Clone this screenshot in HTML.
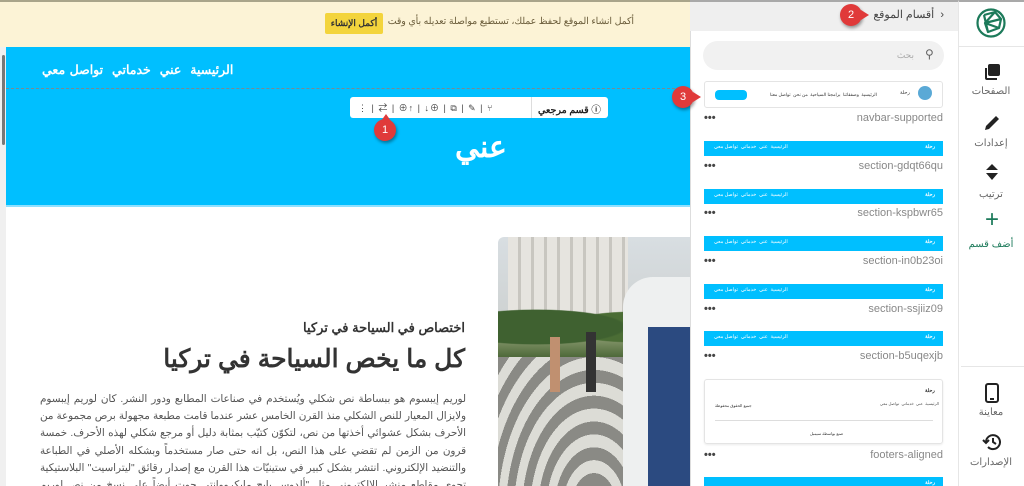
<!DOCTYPE html>
<html><head><meta charset="utf-8"><style>
*{box-sizing:border-box;margin:0;padding:0}
html,body{width:1024px;height:486px;overflow:hidden}
body{position:relative;background:#fff;font-family:"Liberation Sans","Noto Sans CJK SC",sans-serif;}
.abs{position:absolute}
.ar{direction:rtl}
.banner{left:0;top:0;width:690px;height:47px;background:#fcf3d6;border-top:2px solid #a9a48a}
.thumb{position:absolute;left:704px;width:239px;height:15px;background:#00bfff}
.thumb .l{position:absolute;right:8px;top:3px;font-size:5px;color:#fff;font-weight:bold}
.thumb .n{position:absolute;left:10px;top:3px;font-size:5px;color:#fff;direction:rtl}
.lab{position:absolute;right:81px;font-size:11px;color:#888}
.dots{position:absolute;left:704px;font-size:11px;color:#444;font-weight:bold}
.ic{position:absolute;left:958px;width:66px;text-align:center;color:#666;font-size:10px}
.badge{position:absolute;width:22px;height:22px;border-radius:50%;background:#e03a3a;color:#fff;font-size:11px;text-align:center;line-height:22px;box-shadow:1px 2px 3px rgba(0,0,0,.4)}
</style></head><body>
<div class="abs banner"></div>
<div class="abs ar" style="right:390px;top:16px;font-size:9.3px;color:#6a5c3a;white-space:nowrap">أكمل انشاء الموقع لحفظ عملك، تستطيع مواصلة تعديله بأي وقت</div>
<div class="abs" style="left:325px;top:13px;width:58px;height:21px;background:#f3d43c;border-radius:2px;font-size:9px;color:#333;text-align:center;line-height:21px;font-weight:bold">أكمل الإنشاء</div>
<div class="abs" style="left:0;top:47px;width:6px;height:439px;background:#f0f0f0"></div>
<div class="abs" style="left:2px;top:55px;width:3px;height:90px;background:#777;border-radius:2px"></div>
<div class="abs" style="left:6px;top:47px;width:684px;height:158px;background:#00bfff"></div>
<div class="abs" style="left:6px;top:88px;width:684px;border-top:1px dashed #7a8a90"></div>
<div class="abs ar" style="left:42px;top:62px;font-size:12.5px;word-spacing:1px;color:#fff;font-weight:bold;white-space:nowrap">الرئيسية&nbsp; عني&nbsp; خدماتي&nbsp; تواصل معي</div>
<div class="abs" style="left:350px;top:97px;width:258px;height:21px;background:#fff;border-radius:3px"></div>
<div class="abs ar" style="left:538px;top:102px;font-size:9.5px;color:#222;white-space:nowrap;font-weight:bold">ⓘ قسم مرجعي</div>
<div class="abs" style="left:531px;top:97px;width:1px;height:21px;background:#ddd"></div>
<div class="abs" style="left:358px;top:101px;font-size:9px;color:#444;white-space:nowrap;letter-spacing:1px">⋮ | ⇄ | ⊕↑ | ↓⊕ | ⧉ | ✎ | ⑂</div>
<div class="abs" style="left:455px;top:130px;font-size:30px;color:#fff;font-weight:bold">عني</div>
<div class="abs" style="left:6px;top:205px;width:684px;height:2px;background:#8fe0ff"></div>
<div class="abs ar" style="right:559px;top:320px;font-size:13px;color:#333;font-weight:bold;white-space:nowrap">اختصاص في السياحة في تركيا</div>
<div class="abs ar" style="right:559px;top:344px;font-size:25px;color:#333;font-weight:bold;white-space:nowrap">كل ما يخص السياحة في تركيا</div>
<div class="abs ar" style="left:40px;width:426px;top:391px;font-size:10.3px;line-height:17.2px;color:#555;text-align:justify;height:95px;overflow:hidden">لوريم إيبسوم هو ببساطة نص شكلي ويُستخدم في صناعات المطابع ودور النشر. كان لوريم إيبسوم ولايزال المعيار للنص الشكلي منذ القرن الخامس عشر عندما قامت مطبعة مجهولة برص مجموعة من الأحرف بشكل عشوائي أخذتها من نص، لتكوّن كتيّب بمثابة دليل أو مرجع شكلي لهذه الأحرف. خمسة قرون من الزمن لم تقضي على هذا النص، بل انه حتى صار مستخدماً وبشكله الأصلي في الطباعة والتنضيد الإلكتروني. انتشر بشكل كبير في ستينيّات هذا القرن مع إصدار رقائق "ليتراسيت" البلاستيكية تحوي مقاطع منشر الإلكتروني مثل "ألدوس بايج مايكرووانتي حوت أيضاً على نسخ من نص لوريم إيبسوم.</div>
<div class="abs" style="left:498px;top:237px;width:192px;height:249px;border-top-left-radius:6px;overflow:hidden;background:linear-gradient(#d8dee2 0%,#cfd3d3 30%,#8a9a70 40%,#4f6a3a 48%,#9a9a95 55%,#b5b5b0 100%)">
 <div class="abs" style="left:10px;top:0;width:120px;height:90px;background:repeating-linear-gradient(90deg,#e6e4df 0 10px,#c8c6c0 10px 13px)"></div>
 <div class="abs" style="left:0;top:60px;width:192px;height:60px;background:radial-gradient(ellipse at 20% 50%,#3f6130 0 40%,transparent 42%),radial-gradient(ellipse at 70% 50%,#4b6d35 0 35%,transparent 37%)"></div>
 <div class="abs" style="left:0;top:120px;width:192px;height:129px;background:repeating-radial-gradient(ellipse at 50% 120%,#8a8a85 0 8px,#dcdcd6 8px 16px)"></div>
 <div class="abs" style="left:125px;top:40px;width:70px;height:209px;background:#eef0f0;border-top-left-radius:30px"></div>
 <div class="abs" style="left:150px;top:90px;width:45px;height:159px;background:#2b4a80"></div>
 <div class="abs" style="left:52px;top:100px;width:10px;height:55px;background:#c09070"></div>
 <div class="abs" style="left:88px;top:95px;width:10px;height:60px;background:#333"></div>
</div>
<div class="abs" style="left:690px;top:0;width:268px;height:486px;background:#fff;border-left:1px solid #ddd"></div>
<div class="abs" style="left:690px;top:0;width:268px;height:31px;background:#efefef;border-top:2px solid #a9a9a9"></div>
<div class="abs ar" style="right:80px;top:8px;font-size:11px;color:#444;white-space:nowrap">‹&nbsp; أقسام الموقع</div>
<div class="abs" style="left:703px;top:41px;width:241px;height:29px;background:#f1f1f1;border-radius:15px"></div>
<div class="abs" style="left:925px;top:47px;font-size:12px;color:#666">⚲</div>
<div class="abs ar" style="right:110px;top:50px;font-size:9px;color:#aaa">بحث</div>
<div class="abs" style="left:704px;top:81px;width:239px;height:27px;border:1px solid #e4e4e4;border-radius:3px;background:#fff"></div>
<div class="abs" style="left:715px;top:90px;width:32px;height:10px;background:#00bfff;border-radius:4px"></div>
<div class="abs ar" style="left:770px;top:92px;font-size:4.5px;color:#333;white-space:nowrap">الرئيسية&nbsp; وصفقاتنا&nbsp; برامجنا السياحية&nbsp; من نحن&nbsp; تواصل معنا</div>
<div class="abs" style="left:900px;top:90px;font-size:5px;color:#333">رحلة</div>
<div class="abs" style="left:918px;top:86px;width:14px;height:14px;border-radius:50%;background:#5aa9d6"></div>
<div class="lab" style="top:112px">navbar-supported</div><div class="dots" style="top:112px">•••</div>
<div class="thumb" style="top:141px"><span class="l">رحلة</span><span class="n">الرئيسية&nbsp; عني&nbsp; خدماتي&nbsp; تواصل معي</span></div>
<div class="lab" style="top:160px">section-gdqt66qu</div><div class="dots" style="top:160px">•••</div>
<div class="thumb" style="top:189px"><span class="l">رحلة</span><span class="n">الرئيسية&nbsp; عني&nbsp; خدماتي&nbsp; تواصل معي</span></div>
<div class="lab" style="top:207px">section-kspbwr65</div><div class="dots" style="top:207px">•••</div>
<div class="thumb" style="top:236px"><span class="l">رحلة</span><span class="n">الرئيسية&nbsp; عني&nbsp; خدماتي&nbsp; تواصل معي</span></div>
<div class="lab" style="top:255px">section-in0b23oi</div><div class="dots" style="top:255px">•••</div>
<div class="thumb" style="top:284px"><span class="l">رحلة</span><span class="n">الرئيسية&nbsp; عني&nbsp; خدماتي&nbsp; تواصل معي</span></div>
<div class="lab" style="top:303px">section-ssjiiz09</div><div class="dots" style="top:303px">•••</div>
<div class="thumb" style="top:331px"><span class="l">رحلة</span><span class="n">الرئيسية&nbsp; عني&nbsp; خدماتي&nbsp; تواصل معي</span></div>
<div class="lab" style="top:350px">section-b5uqexjb</div><div class="dots" style="top:350px">•••</div>
<div class="abs" style="left:704px;top:379px;width:239px;height:65px;border:1px solid #e4e4e4;border-radius:3px;box-shadow:0 1px 2px rgba(0,0,0,.08)"></div>
<div class="abs" style="left:925px;top:388px;font-size:5px;color:#333;font-weight:bold">رحلة</div>
<div class="abs ar" style="left:880px;top:401px;font-size:4px;color:#555;white-space:nowrap">الرئيسية&nbsp; عني&nbsp; خدماتي&nbsp; تواصل معي</div>
<div class="abs" style="left:715px;top:403px;font-size:4px;color:#333">جميع الحقوق محفوظة</div>
<div class="abs" style="left:715px;top:420px;width:218px;border-top:1px solid #ddd"></div>
<div class="abs" style="left:810px;top:431px;font-size:4px;color:#333">صنع بواسطة سيمبل</div>
<div class="lab" style="top:449px">footers-aligned</div><div class="dots" style="top:449px">•••</div>
<div class="thumb" style="top:477px"><span class="l">رحلة</span></div>
<div class="abs" style="left:958px;top:0;width:66px;height:486px;background:#fff;border-left:1px solid #e6e6e6;border-top:2px solid #a9a9a9"></div>
<div class="abs" style="left:958px;top:46px;width:66px;border-top:1px solid #e6e6e6"></div>
<div class="abs" style="left:961px;top:366px;width:63px;border-top:1px solid #e6e6e6"></div>
<svg class="abs" style="left:975px;top:7px" width="32" height="32" viewBox="0 0 32 32" fill="none" stroke="#1c7a5a" stroke-width="2.2" stroke-linejoin="round"><circle cx="16" cy="16" r="13.5"/><path d="M9 8 L20 5 L26 12 L10 16 L13 25 L24 21 L26 12 M10 16 L20 5 M13 25 L9 8 M10 16 L24 21"/></svg>
<svg class="abs" style="left:983px;top:63px" width="18" height="18" viewBox="0 0 18 18"><rect x="5" y="1" width="12" height="12" rx="2" fill="#222"/><path d="M3 5 v10 a1 1 0 0 0 1 1 h10" stroke="#222" stroke-width="2" fill="none"/></svg>
<div class="ic" style="top:86px">الصفحات</div>
<svg class="abs" style="left:983px;top:114px" width="18" height="18" viewBox="0 0 18 18"><path d="M2 16 L3 12 L13 2 L16 5 L6 15 Z" fill="#222"/></svg>
<div class="ic" style="top:138px">إعدادات</div>
<svg class="abs" style="left:985px;top:164px" width="14" height="16" viewBox="0 0 14 16"><path d="M7 0 L13 6 H1 Z M1 9 H13 L7 16 Z" fill="#222"/></svg>
<div class="ic" style="top:189px">ترتيب</div>
<div class="abs" style="left:980px;top:208px;font-size:24px;color:#1c7a5a;line-height:24px;width:24px;text-align:center">+</div>
<div class="ic" style="top:239px;color:#1c7a5a">أضف قسم</div>
<svg class="abs" style="left:985px;top:383px" width="14" height="20" viewBox="0 0 14 20"><rect x="1" y="1" width="12" height="18" rx="2" fill="none" stroke="#222" stroke-width="2"/><rect x="5" y="15" width="4" height="2" fill="#222"/></svg>
<div class="ic" style="top:407px">معاينة</div>
<svg class="abs" style="left:982px;top:433px" width="20" height="18" viewBox="0 0 20 18" fill="none" stroke="#222" stroke-width="2"><path d="M4 9 a7 7 0 1 1 2 5"/><path d="M1 7 L4 10 L7 7"/><path d="M11 5 V9 L14 11"/></svg>
<div class="ic" style="top:457px">الإصدارات</div>
<div class="badge" style="left:374px;top:119px">1</div>
<div class="abs" style="left:381px;top:114px;border:5px solid transparent;border-bottom:7px solid #e03a3a;border-top:0"></div>
<div class="badge" style="left:840px;top:4px">2</div>
<div class="abs" style="left:861px;top:10px;border:5px solid transparent;border-left:8px solid #e03a3a;border-right:0"></div>
<div class="badge" style="left:672px;top:86px">3</div>
<div class="abs" style="left:693px;top:92px;border:5px solid transparent;border-left:8px solid #e03a3a;border-right:0"></div>
</body></html>
